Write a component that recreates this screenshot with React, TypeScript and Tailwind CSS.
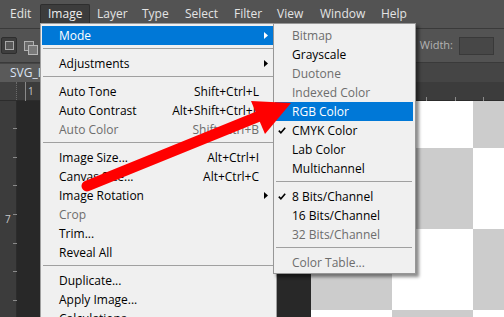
import React from "react";

type Item =
  | "sep"
  | { t: string; k?: string; arrow?: boolean; dis?: boolean; hl?: boolean; check?: boolean };

const mainItems: Item[] = [
  { t: "Mode", hl: true, arrow: true },
  "sep",
  { t: "Adjustments", arrow: true },
  "sep",
  { t: "Auto Tone", k: "Shift+Ctrl+L" },
  { t: "Auto Contrast", k: "Alt+Shift+Ctrl+L" },
  { t: "Auto Color", k: "Shift+Ctrl+B", dis: true },
  "sep",
  { t: "Image Size...", k: "Alt+Ctrl+I" },
  { t: "Canvas Size...", k: "Alt+Ctrl+C" },
  { t: "Image Rotation", arrow: true },
  { t: "Crop", dis: true },
  { t: "Trim..." },
  { t: "Reveal All" },
  "sep",
  { t: "Duplicate..." },
  { t: "Apply Image..." },
  { t: "Calculations..." },
];

const subItems: Item[] = [
  { t: "Bitmap", dis: true },
  { t: "Grayscale" },
  { t: "Duotone", dis: true },
  { t: "Indexed Color", dis: true },
  { t: "RGB Color", hl: true },
  { t: "CMYK Color", check: true },
  { t: "Lab Color" },
  { t: "Multichannel" },
  "sep",
  { t: "8 Bits/Channel", check: true },
  { t: "16 Bits/Channel" },
  { t: "32 Bits/Channel", dis: true },
  "sep",
  { t: "Color Table...", dis: true },
];

const menuBar = [
  { t: "Edit", w: "w-[37px]" },
  { t: "Image", w: "w-[50px]", active: true },
  { t: "Layer", w: "w-[45px]" },
  { t: "Type", w: "w-[43px]" },
  { t: "Select", w: "w-[49px]" },
  { t: "Filter", w: "w-[43px]" },
  { t: "View", w: "w-[43px]" },
  { t: "Window", w: "w-[61px]" },
  { t: "Help", w: "w-[50px]" },
];

function Arrow({ white }: { white?: boolean }) {
  return (
    <svg width="4" height="7" viewBox="0 0 4 7">
      <polygon points="0,0 4,3.5 0,7" fill={white ? "#ffffff" : "#000000"} />
    </svg>
  );
}

function Check() {
  return (
    <svg width="8" height="7" viewBox="0 0 8 7">
      <path d="M0.8 3.6 L2.9 5.8 L7.2 0.8" stroke="#000" strokeWidth="1.6" fill="none" />
    </svg>
  );
}

function Sep() {
  return (
    <div className="h-[9px] pt-[3px] px-[1px]">
      <div className="h-px bg-[#a0a0a0]" />
    </div>
  );
}

export default function App() {
  const checker = [
    ["bg-[#cccccc]", "bg-white", "bg-[#cccccc]"],
    ["bg-white", "bg-[#cccccc]", "bg-white"],
    ["bg-[#cccccc]", "bg-white", "bg-[#cccccc]"],
    ["bg-white", "bg-[#cccccc]", "bg-white"],
  ];
  return (
    <div className="relative w-[504px] h-[317px] overflow-hidden bg-[#282828] font-['Open_Sans',sans-serif] text-[12px] select-none">
      {/* Menu bar */}
      <div className="h-[28px] bg-[#535353] flex items-start pl-[3px] pt-[4px]">
        {menuBar.map((m) => (
          <div
            key={m.t}
            className={`${m.w} h-[19px] pl-[7px] flex items-center text-[#e4e4e4] ${
              m.active ? "bg-[#3c3c3c] border border-[#2e2e2e] border-b-0 rounded-t-[2px] pl-[6px] text-[#eeeeee]" : ""
            }`}
          >
            {m.t}
          </div>
        ))}
      </div>
      <div className="h-px bg-[#3a3a3a]" />
      {/* Options bar */}
      <div className="h-[33px] bg-[#535353] flex items-center pl-[1px]">
        <div className="w-[16px] h-[17px] bg-[#3e3e3e] border border-[#2e2e2e] rounded-[2px] flex items-center justify-center">
          <div className="w-[9px] h-[9px] border border-[#a8a8a8] bg-[#585858]" />
        </div>
        <div className="ml-[7px] mt-[4px]">
          <svg width="14" height="14" viewBox="0 0 14 14">
            <rect x="0.5" y="0.5" width="9" height="9" fill="#6a6a6a" stroke="#b0b0b0" />
            <rect x="4.5" y="4.5" width="9" height="9" fill="#7a7a7a" stroke="#b8b8b8" />
          </svg>
        </div>
        <div className="ml-auto flex items-center mr-[10px]">
          <span className="text-[11px] text-[#b4b4b4] mr-[6px]">Width:</span>
          <div className="w-[35px] h-[18px] bg-[#474747] border border-[#393939]" />
        </div>
      </div>
      <div className="h-px bg-[#3a3a3a]" />
      {/* Tab row */}
      <div className="h-[19px] bg-[#454545] flex items-end">
        <div className="h-[18px] w-[40px] overflow-hidden whitespace-nowrap bg-[#5a5a5a] pl-[10px] flex items-center text-[#dce4f4] text-[12px]">
          SVG_I
        </div>
      </div>
      {/* Horizontal ruler */}
      <div className="relative h-[19px] bg-[#3c3c3c] border-b border-[#2c2c2c] flex">
        <div className="w-[17px] h-full border-r border-dotted border-[#6a6a6a] bg-[#404040]" />
        <svg className="absolute left-0 top-0" width="504" height="19" viewBox="0 0 504 19">
          <line x1="25.5" y1="0" x2="25.5" y2="19" stroke="#8a8a8a" />
          {[426, 455, 483].map((x) => (
            <line key={x} x1={x + 0.5} y1="15" x2={x + 0.5} y2="19" stroke="#8a8a8a" />
          ))}
        </svg>
        <span className="absolute left-[28px] top-[2px] text-[10px] text-[#c8c8c8]">1</span>
      </div>
      {/* Workspace */}
      <div className="flex h-[198px]">
        <div className="relative w-[17px] h-[216px] bg-[#3c3c3c] border-r border-[#2c2c2c]">
          <svg className="absolute left-0 top-0" width="17" height="216" viewBox="0 0 17 216">
            {[128, 157, 185, 214, 243, 271, 300].map((y) => (
              <line key={y} x1="13" y1={y - 101 + 0.5} x2="17" y2={y - 101 + 0.5} stroke="#8a8a8a" />
            ))}
          </svg>
          <span className="absolute left-[5px] top-[111px] text-[10px] text-[#c8c8c8]">7</span>
        </div>
        <div className="w-[294px] h-[216px] bg-[#282828]" />
        <div className="flex-1 h-[216px] overflow-hidden">
          <div className="mt-[-34px] grid grid-cols-[81px_81px_81px] grid-rows-[81px_81px_81px_81px]">
            {checker.flat().map((c, i) => (
              <div key={i} className={c} />
            ))}
          </div>
        </div>
      </div>

      {/* Main dropdown menu */}
      <div className="absolute left-[40px] top-[23px] w-[237px] h-[300px] bg-[#f0f0f0] border border-[#a0a0a0] pt-[2px] px-[1px] text-black">
        {mainItems.map((it, i) =>
          it === "sep" ? (
            <Sep key={i} />
          ) : (
            <div
              key={i}
              className={`h-[19px] flex items-center ${it.hl ? "bg-[#0078d7] text-white" : ""} ${
                it.dis ? "text-[#6d6d6d]" : ""
              }`}
            >
              <span className="pl-[17px] flex-1 whitespace-nowrap">{it.t}</span>
              <span className="whitespace-nowrap">{it.k ?? ""}</span>
              <span className="w-[16px] pl-[5px] flex items-center">{it.arrow ? <Arrow white={it.hl} /> : null}</span>
            </div>
          )
        )}
      </div>

      {/* Submenu */}
      <div className="absolute left-[273px] top-[23px] w-[143px] h-[251px] bg-[#f0f0f0] border border-[#979797] pt-[2px] pl-[1px] pr-[2px] shadow-[3px_3px_3px_rgba(0,0,0,0.45)] text-black">
        {subItems.map((it, i) =>
          it === "sep" ? (
            <Sep key={i} />
          ) : (
            <div
              key={i}
              className={`h-[19px] flex items-center ${it.hl ? "bg-[#0078d7] text-white" : ""} ${
                it.dis ? "text-[#6d6d6d]" : ""
              }`}
            >
              <span className="w-[17px] pl-[3px] flex items-center">{it.check ? <Check /> : null}</span>
              <span className="whitespace-nowrap">{it.t}</span>
            </div>
          )
        )}
      </div>

      {/* Red arrow annotation */}
      <svg className="absolute left-0 top-0 pointer-events-none" width="504" height="317" viewBox="0 0 504 317">
        <line x1="87" y1="186" x2="262" y2="115" stroke="#ff0000" strokeWidth="11" strokeLinecap="round" />
        <polygon points="291,103 251,101 265,134" fill="#ff0000" />
      </svg>
    </div>
  );
}
